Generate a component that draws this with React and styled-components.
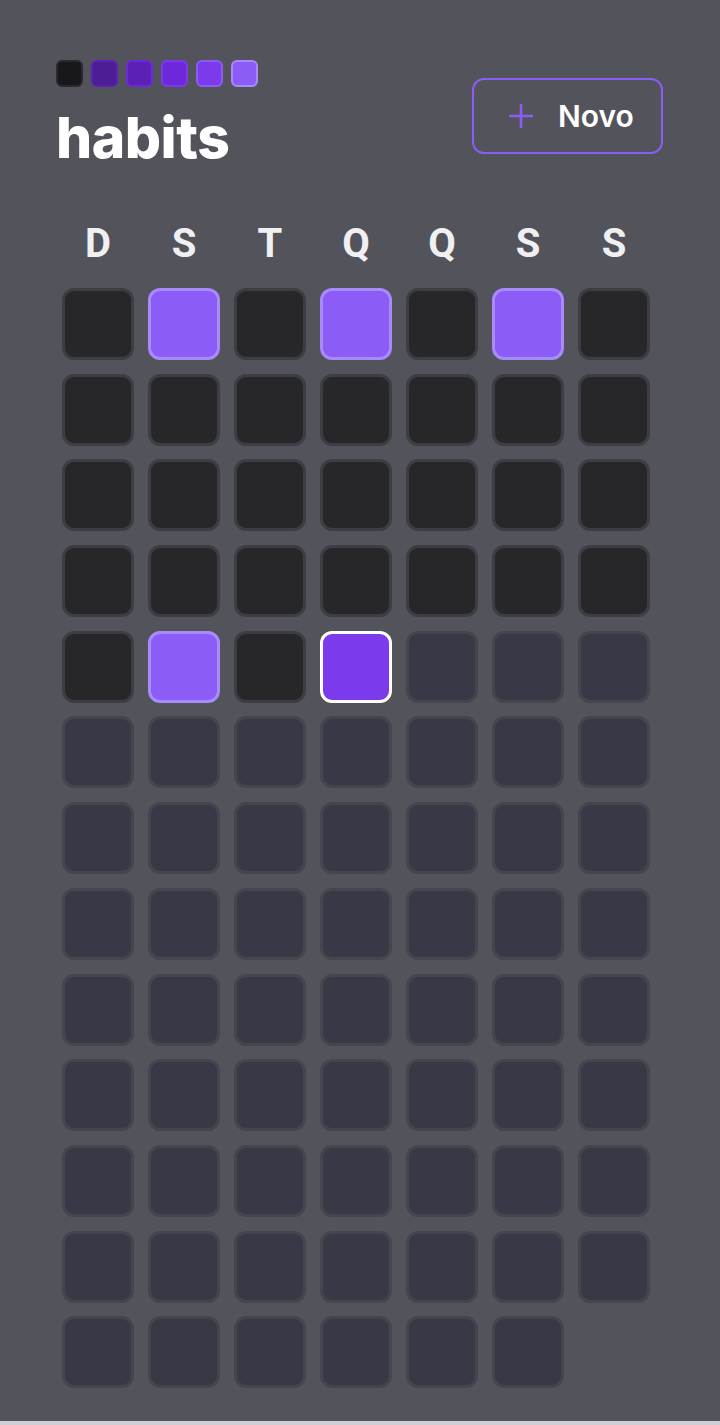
import React from "react";
import styled, { createGlobalStyle } from "styled-components";

const Global = createGlobalStyle`
  html, body { margin: 0; padding: 0; background: #cfcfd3; }
`;

const Page = styled.div`
  height: 1421px;
  background: #53545b;
  box-sizing: border-box;
  padding: 60px 57px 0 56px;
  font-family: Inter, "Noto Sans", sans-serif;
`;

const Header = styled.header`
  display: flex;
  align-items: flex-start;
  justify-content: space-between;
`;

const Brand = styled.div`
  display: flex;
  flex-direction: column;
`;

const Logo = styled.div`
  display: flex;
  gap: 8px;
`;

const LogoSquare = styled.div`
  width: 27px;
  height: 27px;
  box-sizing: border-box;
  border-radius: 6px;
  background: ${(p) => p.$fill};
  border: 2px solid ${(p) => p.$stroke};
`;

const Title = styled.h1`
  margin: 22px 0 0 0;
  font-family: Inter, sans-serif;
  font-weight: 800;
  font-size: 57px;
  line-height: 1;
  letter-spacing: -0.5px;
  color: #ffffff;
`;

const NewButton = styled.button`
  margin-top: 18px;
  height: 76px;
  width: 191px;
  box-sizing: border-box;
  display: flex;
  align-items: center;
  gap: 25px;
  padding: 0 0 0 35px;
  background: transparent;
  border: 2px solid #8b5cf6;
  border-radius: 12px;
  color: #ffffff;
  font-family: Inter, sans-serif;
  font-weight: 600;
  font-size: 30px;
  cursor: pointer;
`;

const Board = styled.section`
  margin: 56px 0 0 6px;
  width: 588px;
  display: flex;
  flex-direction: column;
`;

const DayRow = styled.div`
  display: grid;
  grid-template-columns: repeat(7, 72px);
  column-gap: 14px;
  height: 44px;
  align-items: center;
`;

const DayLabel = styled.span`
  text-align: center;
  font-family: Roboto, sans-serif;
  font-weight: 700;
  font-size: 40px;
  line-height: 1;
  color: #f0f0f2;
`;

const Grid = styled.div`
  margin-top: 22px;
  display: grid;
  grid-template-columns: repeat(7, 72px);
  grid-auto-rows: 72px;
  column-gap: 14px;
  row-gap: 13.7px;
`;

const palette = {
  done: { bg: "#8b5cf6", border: "#a78bfa" },
  today: { bg: "#7c3aed", border: "#ffffff" },
  past: { bg: "#27272a", border: "#3d3e44" },
  future: { bg: "#373a46", border: "#45464d" },
};

const Cell = styled.div`
  box-sizing: border-box;
  border-radius: 12px;
  border: 3px solid ${(p) => palette[p.$state].border};
  background: ${(p) => palette[p.$state].bg};
`;

const logoColors = [
  ["#18181b", "#2a2a2e"],
  ["#4c1d95", "#5b21b6"],
  ["#5b21b6", "#6d28d9"],
  ["#6d28d9", "#7c3aed"],
  ["#7c3aed", "#8b5cf6"],
  ["#8b5cf6", "#a78bfa"],
];

const days = ["D", "S", "T", "Q", "Q", "S", "S"];
const doneSet = new Set([1, 3, 5, 29]);
const todayIndex = 31;
const total = 90;

export default function App() {
  const cells = Array.from({ length: total }, (_, i) => {
    let state = "future";
    if (i === todayIndex) state = "today";
    else if (i < todayIndex) state = doneSet.has(i) ? "done" : "past";
    return state;
  });

  return (
    <>
      <Global />
      <Page>
        <Header>
          <Brand>
            <Logo>
              {logoColors.map(([f, s], i) => (
                <LogoSquare key={i} $fill={f} $stroke={s} />
              ))}
            </Logo>
            <Title>habits</Title>
          </Brand>
          <NewButton>
            <svg width="24" height="24" viewBox="0 0 24 24" fill="none" stroke="#8b5cf6" strokeWidth="2.6" strokeLinecap="round">
              <path d="M12 1v22M1 12h22" />
            </svg>
            Novo
          </NewButton>
        </Header>
        <Board>
          <DayRow>
            {days.map((d, i) => (
              <DayLabel key={i}>{d}</DayLabel>
            ))}
          </DayRow>
          <Grid>
            {cells.map((s, i) => (
              <Cell key={i} $state={s} />
            ))}
          </Grid>
        </Board>
      </Page>
    </>
  );
}
